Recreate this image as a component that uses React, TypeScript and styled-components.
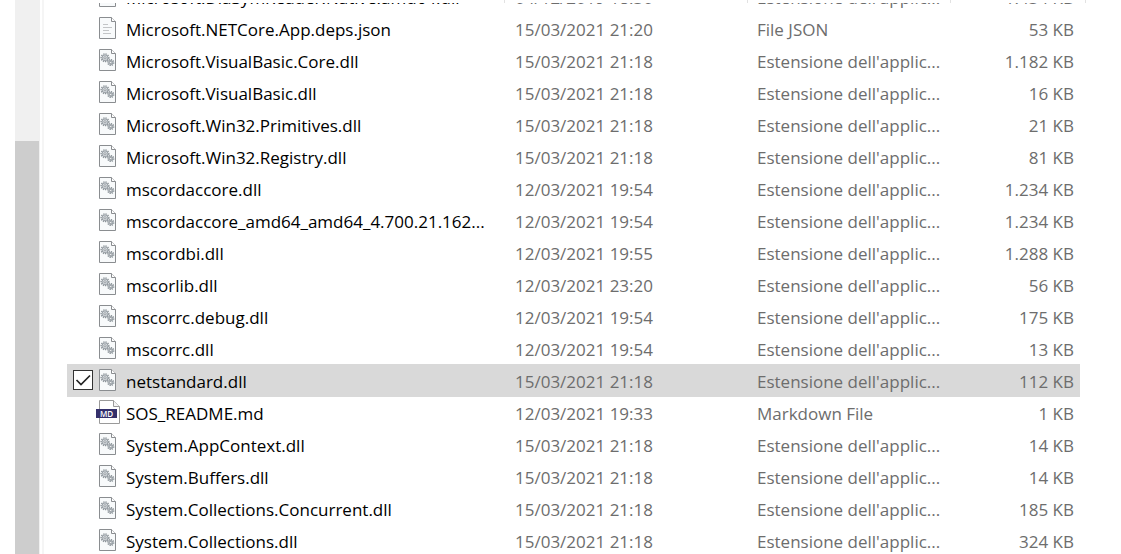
import React from "react";
import styled, { createGlobalStyle } from "styled-components";

const GlobalStyle = createGlobalStyle`
  * { box-sizing: border-box; }
  body { margin: 0; background: #fff; font-family: "Open Sans", "Noto Sans", sans-serif; }
`;

const Explorer = styled.main`
  display: flex;
  height: 100vh;
  padding-left: 15px;
  overflow: hidden;
`;

const ScrollTrack = styled.div`
  flex: none;
  width: 25px;
  padding-top: 141px;
  background: #f0f0f0;
`;

const ScrollThumb = styled.div`
  width: 24px;
  height: 100%;
  background: #cdcdcd;
`;

const Splitter = styled.div`
  flex: none;
  width: 4px;
  border-right: 2px solid #f5f5f5;
`;

const FilePane = styled.section`
  flex: 1;
  min-width: 0;
  display: flex;
  flex-direction: column;
  padding: 0 41px 0 23px;
`;

const HeaderEdge = styled.div`
  flex: none;
  display: flex;
  height: 3px;
  margin-right: -6px;
`;

const HeaderCell = styled.div<{ $width?: number }>`
  flex: ${(p) => (p.$width ? "none" : "1")};
  width: ${(p) => (p.$width ? p.$width + "px" : "auto")};
  border-right: 1px solid #e2e2e2;
`;

const ListViewport = styled.div`
  flex: 1;
  min-height: 0;
  overflow: hidden;
`;

const FileTable = styled.table`
  width: 100%;
  margin-top: -23px;
  table-layout: fixed;
  border-collapse: collapse;
`;

const Col = styled.col<{ $width?: number }>`
  width: ${(p) => (p.$width ? p.$width + "px" : "auto")};
`;

const Row = styled.tr<{ $selected: boolean }>`
  height: 32px;
  background: ${(p) => (p.$selected ? "#d9d9d9" : "transparent")};
  box-shadow: ${(p) => (p.$selected ? "0 1px 0 #d9d9d9" : "none")};
`;

const Cell = styled.td<{ $align?: string }>`
  padding: 4px 6px 0 0;
  color: #6d6d6d;
  font-size: 17px;
  line-height: 28px;
  text-align: ${(p) => p.$align || "left"};
  white-space: nowrap;
`;

const NameCell = styled(Cell)`
  color: #000;
`;

const IconCell = styled.td`
  padding: 0;
  line-height: 0;
  vertical-align: middle;
`;

const CheckBox = styled.input`
  appearance: none;
  display: block;
  width: 20px;
  height: 20px;
  margin: 0 0 0 6px;
  border: 1px solid #333;
  background: #fff url("data:image/svg+xml,%3Csvg xmlns='http://www.w3.org/2000/svg' viewBox='0 0 18 18'%3E%3Cpath d='M2.500 9l4.500 4.500 9-9' fill='none' stroke='%23222' stroke-width='1.7'/%3E%3C/svg%3E");
`;

type Kind = "dll" | "text" | "md";

const gear = (cx: number, cy: number, r: number) => (
  <g fill="none" stroke="#858d93">
    <circle cx={cx} cy={cy} r={r} strokeWidth="1.2" strokeDasharray="1.3 1" />
    <circle cx={cx} cy={cy} r={r - 0.9} fill="#d3d8dc" strokeWidth="0.8" />
    <circle cx={cx} cy={cy} r={1.1} fill="#fff" strokeWidth="0.8" />
  </g>
);

const FileIcon = ({ kind }: { kind: Kind }) =>
  kind === "md" ? (
    <svg width="24" height="24" viewBox="0 0 24 24" aria-hidden="true">
      <path d="M3.500 .5h14l6 6v17h-20z" fill="#fff" stroke="#9a9a9a" />
      <path d="M17.500 .5v6h6" fill="#f4f4f4" stroke="#9a9a9a" />
      <rect x="0" y="9" width="21" height="9" fill="#34306b" />
      <text x="10.500" y="16.500" textAnchor="middle" fontSize="8" fontWeight="600" fill="#fff" fontFamily="Open Sans, sans-serif">MD</text>
    </svg>
  ) : (
    <svg width="24" height="24" viewBox="0 0 24 24" aria-hidden="true">
      <path d="M3.500 1.500h12l4 4v17h-16z" fill="#f8fafb" stroke="#8a8d90" />
      <path d="M15.500 1.500v4h4" fill="#fff" stroke="#8a8d90" />
      {kind === "text" ? (
        <path d="M7 8.500h5M7 11.500h9M7 14.500h6M7 17.500h8" stroke="#c3c5c7" />
      ) : (
        <>
          {gear(9, 9.800, 3.900)}
          {gear(14.800, 14.500, 3)}
        </>
      )}
    </svg>
  );

interface FileEntry {
  name: string;
  date: string;
  size: string;
  kind?: Kind;
  type?: string;
  selected?: boolean;
}

const files: FileEntry[] = [
  { name: "Microsoft.DiaSymReader.Native.amd64.dll", date: "04/12/2019 18:30", size: "1.434 KB" },
  { name: "Microsoft.NETCore.App.deps.json", date: "15/03/2021 21:20", size: "53 KB", kind: "text", type: "File JSON" },
  { name: "Microsoft.VisualBasic.Core.dll", date: "15/03/2021 21:18", size: "1.182 KB" },
  { name: "Microsoft.VisualBasic.dll", date: "15/03/2021 21:18", size: "16 KB" },
  { name: "Microsoft.Win32.Primitives.dll", date: "15/03/2021 21:18", size: "21 KB" },
  { name: "Microsoft.Win32.Registry.dll", date: "15/03/2021 21:18", size: "81 KB" },
  { name: "mscordaccore.dll", date: "12/03/2021 19:54", size: "1.234 KB" },
  { name: "mscordaccore_amd64_amd64_4.700.21.162...", date: "12/03/2021 19:54", size: "1.234 KB" },
  { name: "mscordbi.dll", date: "12/03/2021 19:55", size: "1.288 KB" },
  { name: "mscorlib.dll", date: "12/03/2021 23:20", size: "56 KB" },
  { name: "mscorrc.debug.dll", date: "12/03/2021 19:54", size: "175 KB" },
  { name: "mscorrc.dll", date: "12/03/2021 19:54", size: "13 KB" },
  { name: "netstandard.dll", date: "15/03/2021 21:18", size: "112 KB", selected: true },
  { name: "SOS_README.md", date: "12/03/2021 19:33", size: "1 KB", kind: "md", type: "Markdown File" },
  { name: "System.AppContext.dll", date: "15/03/2021 21:18", size: "14 KB" },
  { name: "System.Buffers.dll", date: "15/03/2021 21:18", size: "14 KB" },
  { name: "System.Collections.Concurrent.dll", date: "15/03/2021 21:18", size: "185 KB" },
  { name: "System.Collections.dll", date: "15/03/2021 21:18", size: "324 KB" },
];

export default function App() {
  return (
    <>
      <GlobalStyle />
      <Explorer>
        <ScrollTrack>
          <ScrollThumb />
        </ScrollTrack>
        <Splitter />
        <FilePane>
          <HeaderEdge>
            <HeaderCell />
            <HeaderCell $width={243} />
            <HeaderCell $width={203} />
            <HeaderCell $width={135} />
          </HeaderEdge>
          <ListViewport>
            <FileTable>
              <colgroup>
                <Col $width={29} />
                <Col $width={30} />
                <Col />
                <Col $width={242} />
                <Col $width={203} />
                <Col $width={120} />
              </colgroup>
              <tbody>
                {files.map((f) => (
                  <Row key={f.name} $selected={!!f.selected}>
                    <IconCell>
                      {f.selected && <CheckBox type="checkbox" defaultChecked aria-label={f.name} />}
                    </IconCell>
                    <IconCell>
                      <FileIcon kind={f.kind || "dll"} />
                    </IconCell>
                    <NameCell>{f.name}</NameCell>
                    <Cell>{f.date}</Cell>
                    <Cell>{f.type || "Estensione dell'applic..."}</Cell>
                    <Cell $align="right">{f.size}</Cell>
                  </Row>
                ))}
              </tbody>
            </FileTable>
          </ListViewport>
        </FilePane>
      </Explorer>
    </>
  );
}
